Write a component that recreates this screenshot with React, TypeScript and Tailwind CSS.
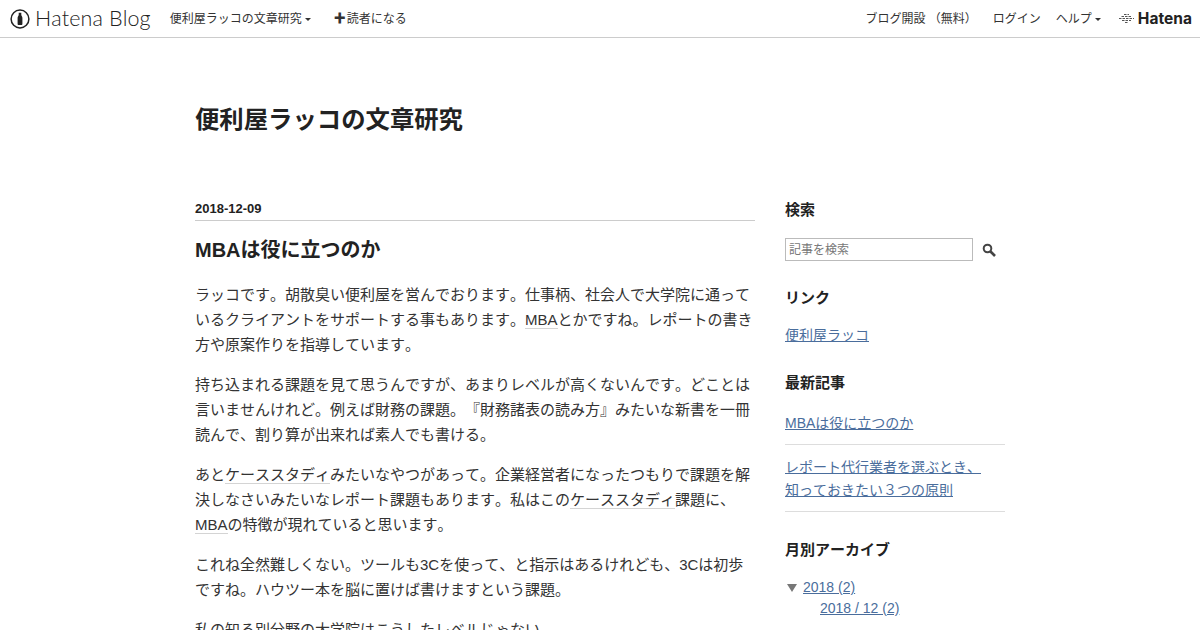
const font = "font-['Liberation_Sans','Noto_Sans_CJK_JP',sans-serif] [font-kerning:none] [text-spacing-trim:space-all]";

function Caret() {
  return <span className="ml-[3px] inline-block h-0 w-0 border-x-[3px] border-t-[3px] border-x-transparent border-t-[#333] align-middle" />;
}

// dotted keyword link in the article body
function Kw({ children }: { children: React.ReactNode }) {
  return <span className="border-b border-[#d4d4d4]">{children}</span>;
}

function NavBar() {
  return (
    <header className="flex h-[38px] items-center justify-between border-b border-[#ccc] bg-white text-[12px] text-[#333]">
      <div className="flex items-center">
        <div className="ml-[10px] flex items-center">
          <svg width="20" height="20" viewBox="0 0 20 20">
            <circle cx="10" cy="10" r="8.9" fill="none" stroke="#222" strokeWidth="1.5" />
            <path d="M8.7 3.8h2.6v2.2c0 .8 1.1 1.4 1.1 2.8v6.2c0 .7-.5 1.1-1.1 1.1H8.7c-.6 0-1.1-.4-1.1-1.1V8.8c0-1.4 1.1-2 1.1-2.8z" fill="#222" />
          </svg>
          <span className="ml-[5px] font-['Lato',sans-serif] text-[21.5px] leading-none font-light tracking-[0.1px] text-[#222]">Hatena Blog</span>
        </div>
        <span className="ml-[19px]">便利屋ラッコの文章研究<Caret /></span>
        <span className="ml-[23px]"><span className="mr-[1px] text-[12px] font-bold">✚</span>読者になる</span>
      </div>
      <div className="flex items-center">
        <span>ブログ開設 （無料）</span>
        <span className="ml-[16px]">ログイン</span>
        <span className="ml-[15px]">ヘルプ<Caret /></span>
        <div className="mr-[8px] ml-[18px] flex items-center">
          <svg width="15" height="11" viewBox="0 0 15 11" fill="none" stroke="#555" strokeWidth="1">
            <path d="M5 1.5h5M2.5 3.5h10M0 5.5h15M3 7.5h9M6 9.5h3" strokeDasharray="2.5 1" />
          </svg>
          <span className="ml-[4px] font-['Inter',sans-serif] text-[15.5px] leading-none font-bold text-[#222]">Hatena</span>
        </div>
      </div>
    </header>
  );
}

function Article() {
  return (
    <article className="w-[560px]">
      <div className="border-b border-[#ccc] pb-[2px] text-[13px] leading-[18px] font-bold text-[#222]">2018-12-09</div>
      <h1 className="mt-[15px] text-[20px] leading-[28px] font-bold text-[#222]">MBAは役に立つのか</h1>
      <div className="mt-[18px] flex flex-col gap-[15px] text-[15px] leading-[25px] text-[#333]">
        <p>ラッコです。胡散臭い便利屋を営んでおります。仕事柄、社会人で大学院に通っているクライアントをサポートする事もあります。<Kw>MBA</Kw>とかですね。レポートの書き方や原案作りを指導しています。</p>
        <p>持ち込まれる課題を見て思うんですが、あまりレベルが高くないんです。どことは言いませんけれど。例えば財務の課題。『財務諸表の読み方』みたいな新書を一冊読んで、割り算が出来れば素人でも書ける。</p>
        <p>あと<Kw>ケーススタディ</Kw>みたいなやつがあって。企業経営者になったつもりで課題を解決しなさいみたいなレポート課題もあります。私はこの<Kw>ケーススタディ</Kw>課題に、<Kw>MBA</Kw>の特徴が現れていると思います。</p>
        <p>これね全然難しくない。ツールも3Cを使って、と指示はあるけれども、3Cは初歩ですね。ハウツー本を脳に置けば書けますという課題。</p>
        <p>私の知る別分野の大学院はこうしたレベルじゃない。</p>
      </div>
    </article>
  );
}

function Sidebar() {
  const link = "text-[#4a6d9c] underline";
  return (
    <aside className="ml-[30px] w-[220px] text-[14px] text-[#333]">
      <h3 className="mt-[1px] text-[15px] leading-[18px] font-bold text-[#222]">検索</h3>
      <div className="mt-[19px] flex items-center">
        <div className="flex h-[23px] w-[188px] items-center border border-[#bbb] px-[3px] text-[12px] text-[#777]">記事を検索</div>
        <svg className="ml-[9px]" width="14" height="14" viewBox="0 0 14 14" fill="none" stroke="#444">
          <circle cx="5.5" cy="5.5" r="3.8" strokeWidth="2" />
          <path d="M8.5 8.5 13 13" strokeWidth="2.6" />
        </svg>
      </div>
      <h3 className="mt-[28px] text-[15px] leading-[18px] font-bold text-[#222]">リンク</h3>
      <div className="mt-[18px] leading-[21px]"><span className={link}>便利屋ラッコ</span></div>
      <h3 className="mt-[28px] text-[15px] leading-[18px] font-bold text-[#222]">最新記事</h3>
      <div className="mt-[20px] border-b border-[#ddd] pb-[9px] leading-[23px]"><span className={link}>MBAは役に立つのか</span></div>
      <div className="border-b border-[#ddd] pt-[11px] pb-[9px] leading-[23px]"><span className={link}>レポート代行業者を選ぶとき、<br />知っておきたい３つの原則</span></div>
      <h3 className="mt-[29px] text-[15px] leading-[18px] font-bold text-[#222]">月別アーカイブ</h3>
      <div className="mt-[18px] flex h-[21px] items-center">
        <span className="ml-[2px] h-0 w-0 border-x-[5px] border-t-[8px] border-x-transparent border-t-[#777]" />
        <span className={`ml-[6px] ${link}`}>2018 (2)</span>
      </div>
      <div className="ml-[35px] leading-[21px]"><span className={link}>2018 / 12 (2)</span></div>
    </aside>
  );
}

export default function App() {
  return (
    <div className={`h-[630px] w-[1200px] overflow-hidden bg-white ${font}`}>
      <NavBar />
      <main className="mx-auto w-[810px]">
        <h1 className="pt-[64px] text-[24.375px] leading-[35px] font-bold text-[#222]">便利屋ラッコの文章研究</h1>
        <div className="mt-[63px] flex items-start">
          <Article />
          <Sidebar />
        </div>
      </main>
    </div>
  );
}
